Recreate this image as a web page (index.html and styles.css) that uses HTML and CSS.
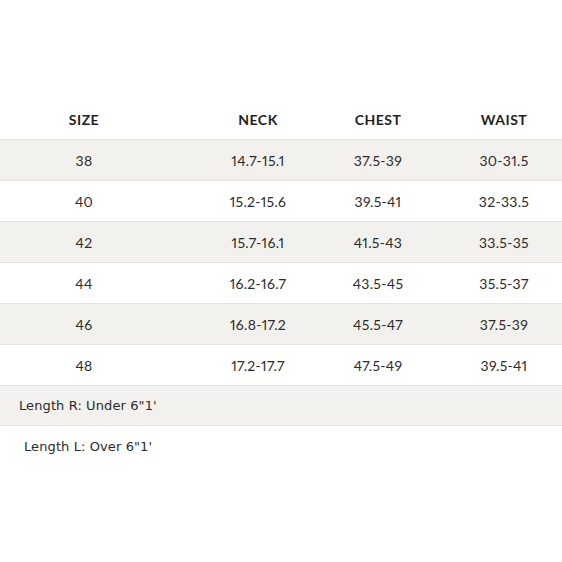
FILE: index.html
```html
<!DOCTYPE html>
<html>
<head>
<meta charset="utf-8">
<link rel="stylesheet" href="styles.css">
</head>
<body>
<div class="page">
  <div class="table">
    <div class="row head">
      <div class="cell">SIZE</div>
      <div class="cell">NECK</div>
      <div class="cell">CHEST</div>
      <div class="cell">WAIST</div>
    </div>
    <div class="row shade">
      <div class="cell">38</div><div class="cell">14.7-15.1</div><div class="cell">37.5-39</div><div class="cell">30-31.5</div>
    </div>
    <div class="row">
      <div class="cell">40</div><div class="cell">15.2-15.6</div><div class="cell">39.5-41</div><div class="cell">32-33.5</div>
    </div>
    <div class="row shade">
      <div class="cell">42</div><div class="cell">15.7-16.1</div><div class="cell">41.5-43</div><div class="cell">33.5-35</div>
    </div>
    <div class="row">
      <div class="cell">44</div><div class="cell">16.2-16.7</div><div class="cell">43.5-45</div><div class="cell">35.5-37</div>
    </div>
    <div class="row shade">
      <div class="cell">46</div><div class="cell">16.8-17.2</div><div class="cell">45.5-47</div><div class="cell">37.5-39</div>
    </div>
    <div class="row">
      <div class="cell">48</div><div class="cell">17.2-17.7</div><div class="cell">47.5-49</div><div class="cell">39.5-41</div>
    </div>
    <div class="note shade r">Length R: Under 6"1'</div>
    <div class="note l">Length L: Over 6"1'</div>
  </div>
</div>
</body>
</html>
```
FILE: styles.css
```css
html, body {
  margin: 0;
  padding: 0;
  background: #fff;
  overflow: hidden;
}
.page {
  width: 562px;
  height: 562px;
  padding-top: 100px;
  box-sizing: border-box;
  overflow: hidden;
}
.table {
  width: 600px;
  color: #2b2b2b;
  font-family: "Lato", "Open Sans", sans-serif;
  font-size: 14px;
  font-variant-numeric: proportional-nums;
}
.row {
  display: grid;
  grid-template-columns: 168px 180px 60px 192px;
  height: 41px;
  align-items: center;
  border-top: 1px solid #e4e2df;
  box-sizing: border-box;
}
.row .cell {
  text-align: center;
  white-space: nowrap;
  display: flex;
  justify-content: center;
  letter-spacing: 0.3px;
}
.row.head {
  height: 39px;
  border-top: none;
  font-weight: 700;
  font-size: 14px;
  color: #1f1f1f;
}
.row.head .cell {
  letter-spacing: 0.5px;
}
.shade {
  background: #f3f1ee;
}
.note {
  height: 41px;
  box-sizing: border-box;
  border-top: 1px solid #e4e2df;
  display: flex;
  align-items: center;
  font-family: "DejaVu Sans", Verdana, sans-serif;
  font-size: 13px;
  letter-spacing: 0.1px;
  color: #2b2b2b;
}
.note.r {
  padding-left: 19px;
  border-bottom: 1px solid #e4e2df;
}
.note.l {
  border-top: none;
  padding-left: 24px;
}
```
